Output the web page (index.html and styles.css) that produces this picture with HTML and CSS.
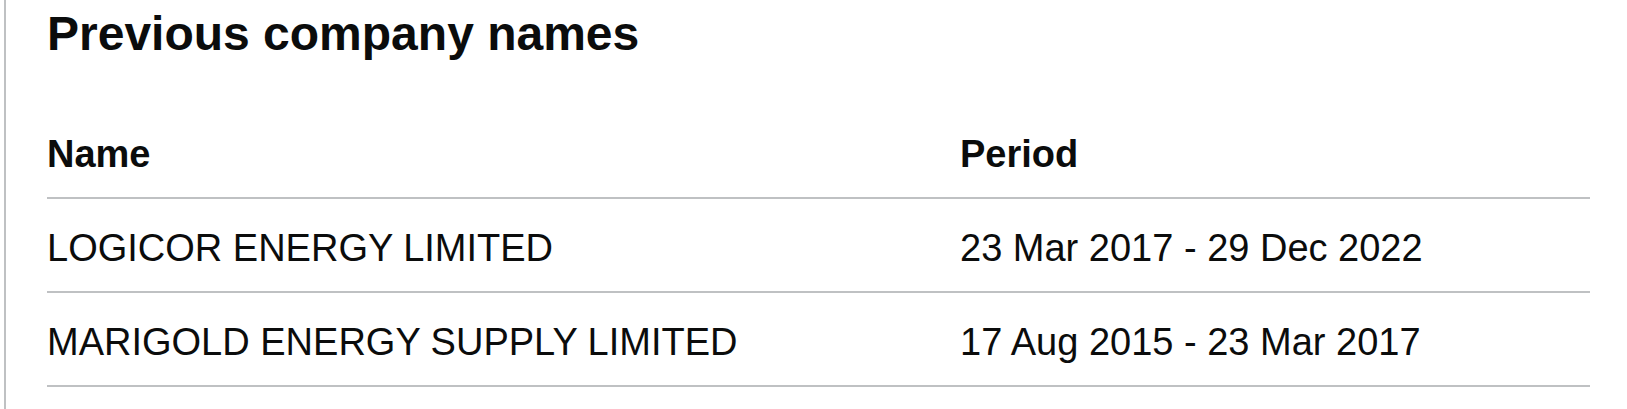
FILE: index.html
```html
<!DOCTYPE html>
<html lang="en">
<head>
<meta charset="UTF-8">
<title>Previous company names</title>
<link rel="stylesheet" href="styles.css">
</head>
<body>

<div class="panel">
  <h2 class="heading">Previous company names</h2>

  <table class="names">
    <thead>
      <tr><th class="col-name">Name</th><th>Period</th></tr>
    </thead>
    <tbody>
      <tr><td>LOGICOR ENERGY LIMITED</td><td>23 Mar 2017 - 29 Dec 2022</td></tr>
      <tr><td>MARIGOLD ENERGY SUPPLY LIMITED</td><td>17 Aug 2015 - 23 Mar 2017</td></tr>
    </tbody>
  </table>
</div>

</body>
</html>
```

FILE: styles.css
```css
body { margin: 0; background: #fff; color: #0b0c0c; font-family: "Liberation Sans", Arial, sans-serif; }
.panel { margin-left: 4px; border-left: 2px solid #bfc1c3; padding: 4px 37px 40px 41px; min-height: 409px; box-sizing: border-box; }
.heading { margin: 0 0 41px; font-size: 48px; line-height: 60px; font-weight: 700; }
.names { width: 1543px; border-collapse: collapse; font-size: 38px; line-height: 52px; }
.names th, .names td { text-align: left; padding: 23px 0 17px; border-bottom: 2px solid #bfc1c3; }
.names th { font-weight: 700; }
.names .col-name { width: 913px; }
```
